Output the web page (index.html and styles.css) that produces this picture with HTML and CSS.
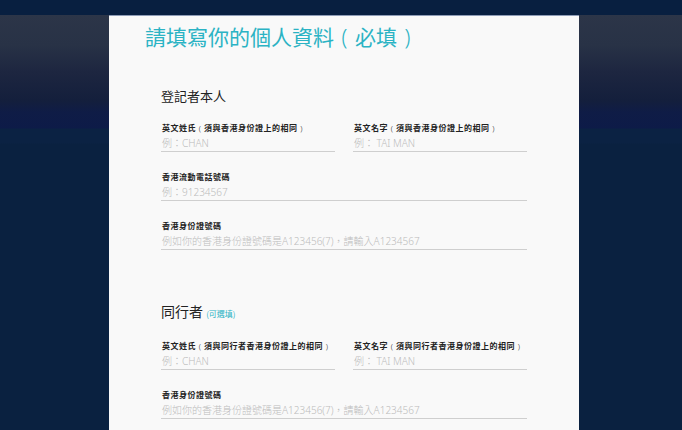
FILE: index.html
```html
<!DOCTYPE html>
<html lang="zh-Hant">
<head>
<meta charset="utf-8">
<title>請填寫你的個人資料</title>
<link rel="stylesheet" href="styles.css">
</head>
<body>
<main class="card">
  <h1 class="title">請填寫你的個人資料<span class="p">(</span>必填<span class="p">)</span></h1>
  <section class="section">
    <h2 class="section-title">登記者本人</h2>
    <div class="row two">
      <div class="field">
        <label class="label">英文姓氏<span class="p">(</span>須與香港身份證上的相同<span class="p">)</span></label>
        <div class="input">例：CHAN</div>
      </div>
      <div class="field">
        <label class="label">英文名字<span class="p">(</span>須與香港身份證上的相同<span class="p">)</span></label>
        <div class="input">例： TAI MAN</div>
      </div>
    </div>
    <div class="row">
      <div class="field">
        <label class="label">香港流動電話號碼</label>
        <div class="input">例：91234567</div>
      </div>
    </div>
    <div class="row">
      <div class="field">
        <label class="label">香港身份證號碼</label>
        <div class="input">例如你的香港身份證號碼是A123456(7)，請輸入A1234567</div>
      </div>
    </div>
  </section>
  <section class="section second">
    <h2 class="section-title">同行者 <span class="optional">(可選填)</span></h2>
    <div class="row two">
      <div class="field">
        <label class="label">英文姓氏<span class="p">(</span>須與同行者香港身份證上的相同<span class="p">)</span></label>
        <div class="input">例：CHAN</div>
      </div>
      <div class="field">
        <label class="label">英文名字<span class="p">(</span>須與同行者香港身份證上的相同<span class="p">)</span></label>
        <div class="input">例： TAI MAN</div>
      </div>
    </div>
    <div class="row">
      <div class="field">
        <label class="label">香港身份證號碼</label>
        <div class="input">例如你的香港身份證號碼是A123456(7)，請輸入A1234567</div>
      </div>
    </div>
  </section>
</main>
</body>
</html>
```

FILE: styles.css
```css
html, body {
  margin: 0;
  padding: 0;
}
body {
  height: 430px;
  overflow: hidden;
  font-family: "Noto Sans", "Noto Sans CJK TC", sans-serif;
  background:
    linear-gradient(#081f40 0, #081f40 15px,
      #2c3548 15px, #283246 45px, #1d2640 72px, #141f3c 100px,
      #0f1c46 112px, #0d1b48 128px, #0b2243 129px, #0b2243 143px,
      #0a2140 144px, #0a2140 100%);
}
.card {
  width: 470px;
  margin: 15px 0 0 109px;
  height: 415px;
  box-sizing: border-box;
  background: #f9f9f9;
  border-top: 1px solid #8e9cb6;
  padding: 6px 52px 0;
}
.p {
  display: inline-block;
  width: 1em;
  text-align: center;
  font-family: "Noto Sans", sans-serif;
  font-weight: 300;
}
.title {
  margin: 0 0 0 -16px;
  font-family: "Noto Sans CJK TC", sans-serif;
  font-weight: 400;
  font-size: 21px;
  line-height: 28px;
  color: #2bb3c4;
}
.section {
  margin-top: 35px;
}
.section.second {
  margin-top: 51px;
}
.section-title {
  margin: 0 0 16px;
  font-family: "Noto Sans CJK TC", sans-serif;
  font-weight: 400;
  font-size: 13px;
  line-height: 20px;
  color: #222;
}
.second .section-title {
  font-size: 14px;
}
.optional {
  font-size: 8px;
  color: #2bb3c4;
}
.row {
  display: flex;
  margin-bottom: 19px;
}
.row.two {
  display: grid;
  grid-template-columns: 174px 174px;
  column-gap: 18px;
}
.field {
  flex: 1;
  display: flex;
  flex-direction: column;
}
.label {
  font-family: "Noto Sans CJK TC", sans-serif;
  font-size: 8px;
  line-height: 12px;
  font-weight: 700;
  letter-spacing: 0.5px;
  color: #222;
  white-space: nowrap;
  padding-left: 1px;
}
.input {
  height: 17px;
  border-bottom: 1px solid #cfcfcf;
  font-family: "Noto Sans", "Noto Sans CJK TC", sans-serif;
  font-weight: 300;
  font-size: 10px;
  line-height: 18px;
  color: #bcbcbc;
  padding-left: 1px;
  white-space: nowrap;
}
```
